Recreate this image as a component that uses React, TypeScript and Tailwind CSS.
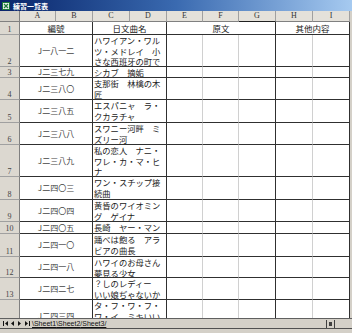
import React from 'react';

const jp = { fontFamily: '"Noto Sans CJK JP", "Noto Sans", sans-serif' };
const serif = { fontFamily: '"Liberation Serif", "DejaVu Serif", serif' };

type Row = { n: string; h: number; code: string; lines: string[] };

const rows: Row[] = [
  { n: '2', h: 32, code: 'J一八一二', lines: ['ハワイアン・ワル', 'ツ・メドレイ　小', 'さな西班牙の町で'] },
  { n: '3', h: 11, code: 'J二三七九', lines: ['シカブ　摘姤'] },
  { n: '4', h: 22, code: 'J二三八〇', lines: ['支那街　林檎の木', '匠'] },
  { n: '5', h: 23, code: 'J二三八五', lines: ['エスパニャ　ラ・', 'クカラチャ'] },
  { n: '6', h: 22, code: 'J二三八八', lines: ['スワニー河畔　ミ', 'ズリー河'] },
  { n: '7', h: 32, code: 'J二三八九', lines: ['私の恋人　ナニ・', 'ワレ・カ・マ・ヒ', 'ナ'] },
  { n: '8', h: 23, code: 'J二四〇三', lines: ['ワン・スチップ接', '続曲'] },
  { n: '9', h: 22, code: 'J二四〇四', lines: ['黄昏のワイオミン', 'グ　ゲイナ'] },
  { n: '10', h: 12, code: 'J二四〇五', lines: ['長崎　ヤー・マン'] },
  { n: '11', h: 23, code: 'J二四一〇', lines: ['踊べは飽る　アラ', 'ビアの曲長'] },
  { n: '12', h: 21, code: 'J二四一八', lines: ['ハワイのお母さん', '夢見る少女'] },
  { n: '13', h: 22, code: 'J二四二七', lines: ['？しのレディー', 'いい娘ぢゃないか'] },
  { n: '14', h: 33, code: 'J二四三四', lines: ['タ・フ・ワ・フ・', 'ワ・イ　ミキいい', ''] },
];

const cols: { l: string; w: number; dark?: boolean }[] = [
  { l: 'A', w: 36 },
  { l: 'B', w: 37 },
  { l: 'C', w: 37 },
  { l: 'D', w: 37 },
  { l: 'E', w: 36 },
  { l: 'F', w: 36 },
  { l: 'G', w: 37, dark: true },
  { l: 'H', w: 37 },
  { l: 'I', w: 37 },
];

function RowHead({ n, h }: { n: string; h: number }) {
  return (
    <div
      className="w-[20px] shrink-0 flex items-end justify-center border-r border-b border-r-[#808080] border-b-[#a0a0a0] bg-[#dcd8d0] text-[8px] text-[#444] leading-[9px]"
      style={{ ...serif, height: h }}
    >
      {n}
    </div>
  );
}

function Nav() {
  return (
    <svg width="30" height="7" viewBox="0 0 30 7" className="shrink-0">
      {/* first */}
      <rect x="1" y="1" width="1" height="5" fill="#111" />
      <path d="M6 1 L3 3.5 L6 6 Z" fill="#111" />
      {/* prev */}
      <path d="M12 1 L9 3.5 L12 6 Z" fill="#111" />
      {/* next */}
      <path d="M16 1 L19 3.5 L16 6 Z" fill="#111" />
      {/* last */}
      <path d="M23 1 L26 3.5 L23 6 Z" fill="#111" />
      <rect x="27" y="1" width="1" height="5" fill="#111" />
    </svg>
  );
}

const merged =
  'shrink-0 bg-white border-r border-b border-[#303030] flex items-center justify-center text-[8.5px] text-[#222] leading-[11px]';

export default function App() {
  return (
    <div className="w-[352px] h-[333px] bg-[#d4d0c8] overflow-hidden flex flex-col select-none">
      {/* title bar */}
      <div className="h-[11px] shrink-0 flex items-center gap-[3px] pl-[2px] bg-gradient-to-r from-[#0a246a] via-[#3a6ab0] to-[#a6caf0]">
        <svg width="8" height="8" viewBox="0 0 8 8">
          <rect x="0" y="0" width="8" height="8" fill="#1d7a3a" />
          <rect x="1" y="1" width="6" height="6" fill="#e8f0e8" />
          <path d="M2 2 L6 6 M6 2 L2 6" stroke="#1d7a3a" strokeWidth="1.2" />
        </svg>
        <span className="text-[7px] font-bold text-white leading-[10px]" style={jp}>
          練習一覧表
        </span>
      </div>

      {/* column header */}
      <div className="h-[11px] shrink-0 flex">
        <div className="w-[20px] shrink-0 bg-[#d4d0c8] border-r border-b border-[#808080]" />
        {cols.map((c) => (
          <div
            key={c.l}
            className={`shrink-0 flex items-center justify-center bg-[#e4e1da] border-r border-b border-r-[#a0a0a0] text-[8px] text-[#333] leading-[10px] ${
              c.dark ? 'border-b-[#202020]' : 'border-b-[#808080]'
            }`}
            style={{ ...serif, width: c.w }}
          >
            {c.l}
          </div>
        ))}
      </div>

      {/* body */}
      <div className="flex-1 overflow-hidden flex flex-col">
        {/* row 1 */}
        <div className="flex shrink-0 h-[13px]">
          <RowHead n="1" h={13} />
          <div className={`w-[73px] ${merged}`} style={jp}>
            編號
          </div>
          <div className={`w-[74px] ${merged}`} style={jp}>
            日文曲名
          </div>
          <div className={`w-[109px] ${merged}`} style={jp}>
            原文
          </div>
          <div className={`w-[74px] ${merged}`} style={jp}>
            其他内容
          </div>
        </div>

        {rows.map((r) => (
          <div key={r.n} className="flex shrink-0" style={{ height: r.h }}>
            <RowHead n={r.n} h={r.h} />
            <div
              className="w-[73px] shrink-0 bg-white border-r border-b border-[#303030] flex items-center justify-center text-[8px] text-[#444] leading-[10px]"
              style={jp}
            >
              {r.code}
            </div>
            <div
              className="w-[74px] shrink-0 bg-white border-r border-b border-[#303030] flex flex-col pl-[1px] text-[8.3px] text-[#222] leading-[10.5px] overflow-hidden"
              style={jp}
            >
              {r.lines.map((t, i) => (
                <div key={i} className="whitespace-nowrap h-[10.5px]">
                  {t}
                </div>
              ))}
            </div>
            <div className="w-[36px] shrink-0 bg-white border-r border-b border-r-[#d0d0d0] border-b-[#303030]" />
            <div className="w-[36px] shrink-0 bg-white border-r border-b border-r-[#d0d0d0] border-b-[#303030]" />
            <div className="w-[37px] shrink-0 bg-white border-r border-b border-[#303030]" />
            <div className="w-[37px] shrink-0 bg-white border-r border-b border-r-[#d0d0d0] border-b-[#303030]" />
            <div className="w-[37px] shrink-0 bg-white border-r border-b border-[#303030]" />
          </div>
        ))}
      </div>

      {/* sheet tabs bar */}
      <div className="h-[10px] shrink-0 flex items-center border-t border-[#606060] bg-[#d4d0c8]">
        <div className="pl-[2px] w-[32px] shrink-0 flex items-center">
          <Nav />
        </div>
        <div
          className="flex items-center text-[7px] text-[#111] leading-[9px] underline"
          style={{ fontFamily: '"Liberation Sans", Arial, sans-serif' }}
        >
          <span>\Sheet1</span>
          <span>\Sheet2</span>
          <span>/Sheet3/</span>
        </div>
        <div className="flex-1" />
        <div className="w-[9px] h-[8px] mr-[17px] border-l border-r border-[#404040] flex items-center justify-center">
          <div className="w-[3px] h-[4px] bg-[#404040]" />
        </div>
      </div>
      <div className="h-[5px] shrink-0 border-t border-[#505050] bg-[#d4d0c8]" />
    </div>
  );
}
